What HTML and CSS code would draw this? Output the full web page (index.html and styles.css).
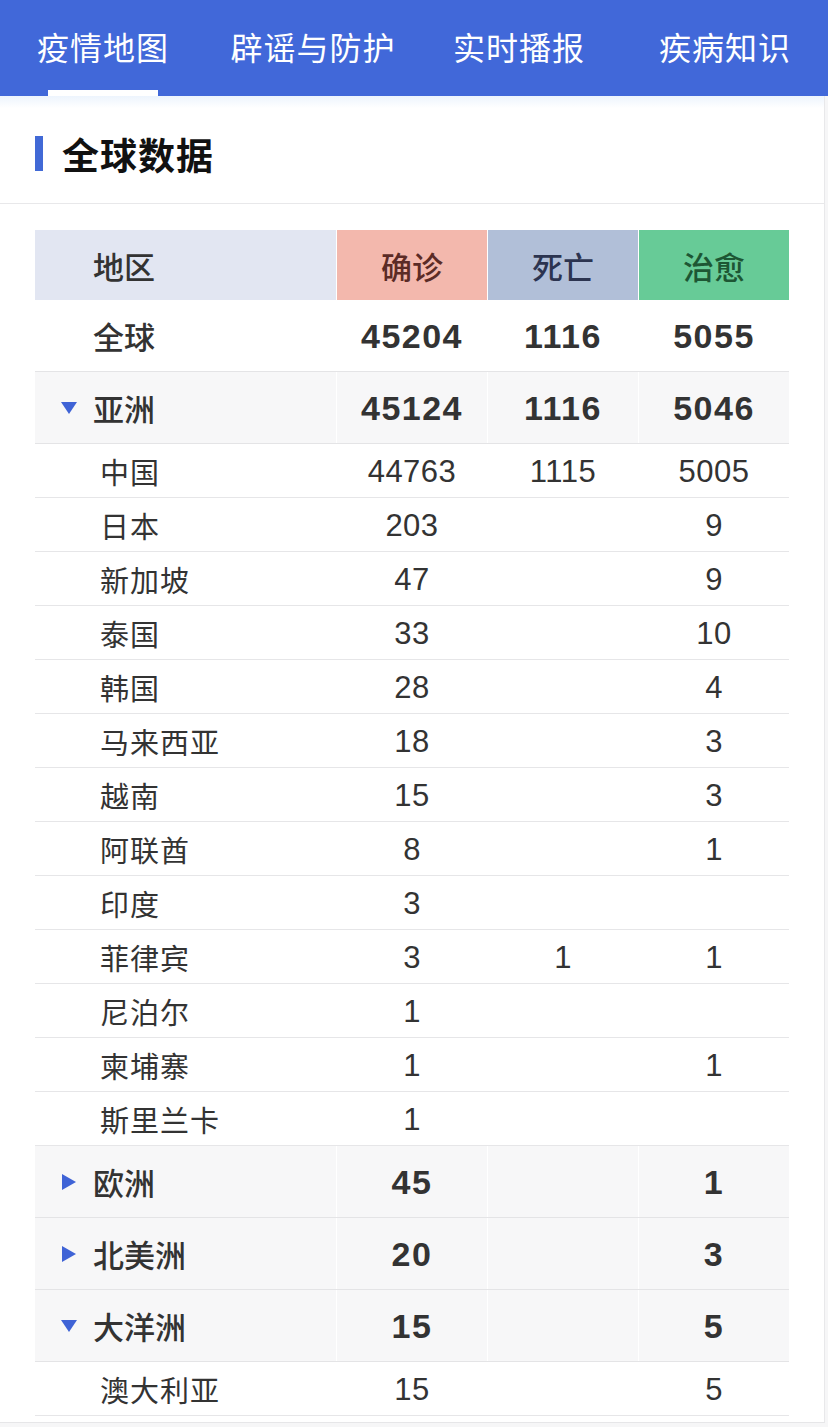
FILE: index.html
```html
<!DOCTYPE html>
<html lang="zh-CN">
<head>
<meta charset="utf-8">
<title>全球数据</title>
<link rel="stylesheet" href="styles.css">
</head>
<body>
<nav class="tabs">
  <div class="tab active">疫情地图</div>
  <div class="tab">辟谣与防护</div>
  <div class="tab">实时播报</div>
  <div class="tab">疾病知识</div>
</nav>
<main class="card">
  <header class="section-title"><span class="bar"></span><h1>全球数据</h1></header>
  <div class="table">
    <div class="row head">
      <div class="cell region">地区</div>
      <div class="cell confirm">确诊</div>
      <div class="cell dead">死亡</div>
      <div class="cell cured">治愈</div>
    </div>
    <div class="row big">
      <div class="cell region">全球</div>
      <div class="cell num">45204</div>
      <div class="cell num">1116</div>
      <div class="cell num">5055</div>
    </div>
    <div class="row big cont">
      <div class="cell region"><span class="tri down"></span>亚洲</div>
      <div class="cell num">45124</div>
      <div class="cell num">1116</div>
      <div class="cell num">5046</div>
    </div>
    <div class="row sub"><div class="cell region">中国</div><div class="cell num">44763</div><div class="cell num">1115</div><div class="cell num">5005</div></div>
    <div class="row sub"><div class="cell region">日本</div><div class="cell num">203</div><div class="cell num"></div><div class="cell num">9</div></div>
    <div class="row sub"><div class="cell region">新加坡</div><div class="cell num">47</div><div class="cell num"></div><div class="cell num">9</div></div>
    <div class="row sub"><div class="cell region">泰国</div><div class="cell num">33</div><div class="cell num"></div><div class="cell num">10</div></div>
    <div class="row sub"><div class="cell region">韩国</div><div class="cell num">28</div><div class="cell num"></div><div class="cell num">4</div></div>
    <div class="row sub"><div class="cell region">马来西亚</div><div class="cell num">18</div><div class="cell num"></div><div class="cell num">3</div></div>
    <div class="row sub"><div class="cell region">越南</div><div class="cell num">15</div><div class="cell num"></div><div class="cell num">3</div></div>
    <div class="row sub"><div class="cell region">阿联酋</div><div class="cell num">8</div><div class="cell num"></div><div class="cell num">1</div></div>
    <div class="row sub"><div class="cell region">印度</div><div class="cell num">3</div><div class="cell num"></div><div class="cell num"></div></div>
    <div class="row sub"><div class="cell region">菲律宾</div><div class="cell num">3</div><div class="cell num">1</div><div class="cell num">1</div></div>
    <div class="row sub"><div class="cell region">尼泊尔</div><div class="cell num">1</div><div class="cell num"></div><div class="cell num"></div></div>
    <div class="row sub"><div class="cell region">柬埔寨</div><div class="cell num">1</div><div class="cell num"></div><div class="cell num">1</div></div>
    <div class="row sub"><div class="cell region">斯里兰卡</div><div class="cell num">1</div><div class="cell num"></div><div class="cell num"></div></div>
    <div class="row big cont">
      <div class="cell region"><span class="tri right"></span>欧洲</div>
      <div class="cell num">45</div>
      <div class="cell num"></div>
      <div class="cell num">1</div>
    </div>
    <div class="row big cont">
      <div class="cell region"><span class="tri right"></span>北美洲</div>
      <div class="cell num">20</div>
      <div class="cell num"></div>
      <div class="cell num">3</div>
    </div>
    <div class="row big cont">
      <div class="cell region"><span class="tri down"></span>大洋洲</div>
      <div class="cell num">15</div>
      <div class="cell num"></div>
      <div class="cell num">5</div>
    </div>
    <div class="row sub"><div class="cell region">澳大利亚</div><div class="cell num">15</div><div class="cell num"></div><div class="cell num">5</div></div>
  </div>
</main>
</body>
</html>
```

FILE: styles.css
```css
* { box-sizing: border-box; margin: 0; padding: 0; }
html, body { background: #f6f6f7; }
body {
  width: 828px;
  font-family: "Liberation Sans", "Noto Sans CJK SC", sans-serif;
  color: #333;
}
.tabs {
  display: flex;
  height: 96px;
  background: #4168d9;
}
.tab {
  flex: 1;
  position: relative;
  display: flex;
  align-items: center;
  justify-content: center;
  color: #fff;
  font-family: "Noto Sans CJK SC", sans-serif;
  font-size: 32px;
  padding-bottom: 4px;
  letter-spacing: 1px;
}
.tab:first-child { padding-right: 4px; }
.tab.active::after {
  content: "";
  position: absolute;
  left: 48px;
  width: 110px;
  bottom: 0;
  height: 6px;
  background: #fff;
}
.card {
  width: 825px;
  background: #fff;
  border-right: 1px solid #e8e8ea;
  border-bottom: 1px solid #e6e6e8;
  padding-bottom: 6px;
  background-image: linear-gradient(#edf4fd, #fff 12px);
}
.section-title {
  height: 108px;
  display: flex;
  align-items: center;
  padding-left: 35px;
  padding-top: 8px;
  border-bottom: 1px solid #e8e8ea;
}
.section-title .bar {
  width: 8px;
  height: 35px;
  background: #4169d6;
  margin-right: 19px;
}
.section-title h1 {
  font-family: "Noto Sans CJK SC", sans-serif;
  font-size: 37px;
  font-weight: 700;
  color: #111;
  letter-spacing: 1px;
}
.table {
  width: 754px;
  margin: 26px 0 0 35px;
}
.row {
  display: grid;
  grid-template-columns: 301px 150px 150px 150px;
  column-gap: 1px;
}
.cell {
  display: flex;
  align-items: center;
  justify-content: center;
  font-family: "Noto Sans CJK SC", sans-serif;
}
.cell.region { justify-content: flex-start; padding-left: 58px; }
.head { height: 70px; }
.head .cell { font-size: 31px; font-weight: 500; }
.head .region { background: #e2e6f2; color: #333; }
.head .confirm { background: #f3b8ad; color: #5b2b26; }
.head .dead { background: #b1bfd8; color: #2c3450; }
.head .cured { background: #67cb97; color: #1d5634; }
.big {
  height: 72px;
  border-bottom: 1px solid #e4e4e6;
}
.big .cell { font-size: 31px; font-weight: 500; color: #333; }
.big .num {
  font-family: "Liberation Sans", sans-serif;
  font-weight: 700;
  font-size: 34px;
  letter-spacing: 1.5px;
  padding-top: 2px;
}
.cont .cell { background: #f7f7f8; }
.cont .region { padding-left: 26px; }
.tri {
  width: 0;
  height: 0;
  margin-right: 16px;
}
.tri.down {
  border-left: 8px solid transparent;
  border-right: 8px solid transparent;
  border-top: 12px solid #3f63d6;
}
.tri.right {
  border-top: 8px solid transparent;
  border-bottom: 8px solid transparent;
  border-left: 14px solid #3f63d6;
  margin-left: 1px;
  margin-right: 17px;
}
.sub {
  height: 54px;
  border-bottom: 1px solid #e6e6e8;
}
.sub .cell { font-size: 29px; color: #333; }
.sub .region { padding-left: 65px; letter-spacing: 1px; }
.sub .num {
  font-family: "Liberation Sans", sans-serif;
  font-size: 31px;
  letter-spacing: 0.5px;
  padding-top: 2px;
}
```
